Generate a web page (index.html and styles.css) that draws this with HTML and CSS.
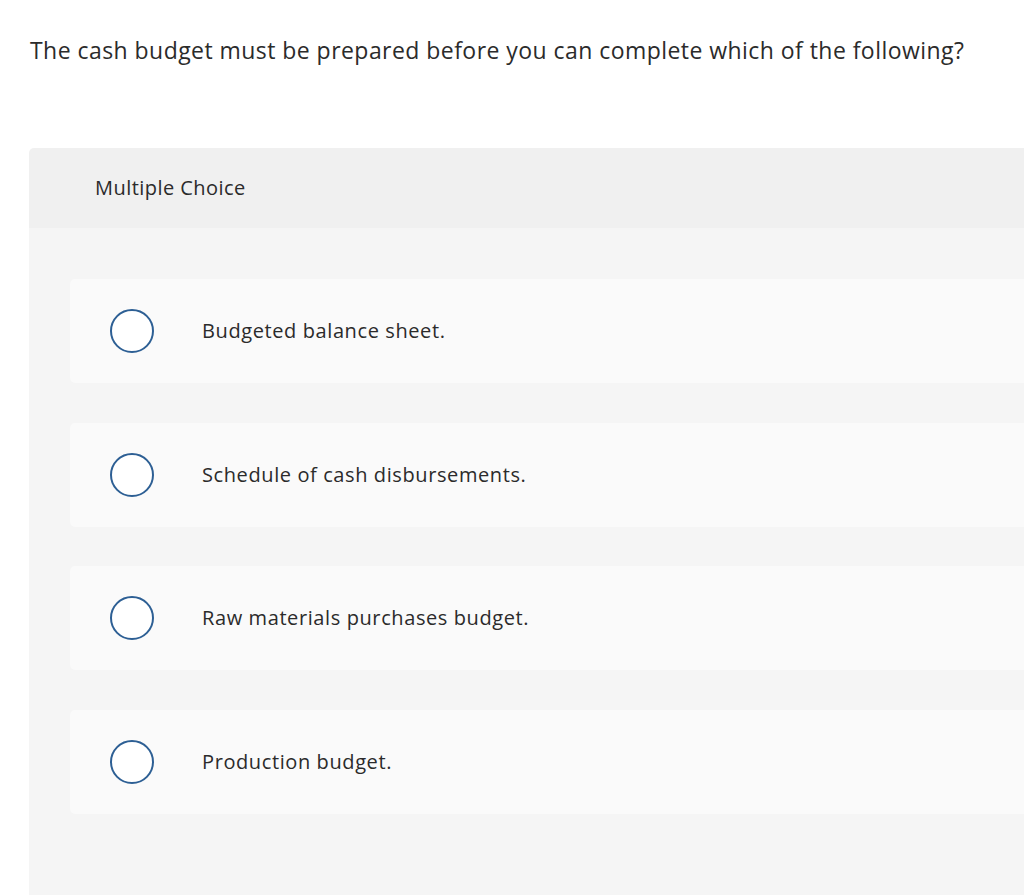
FILE: index.html
```html
<!DOCTYPE html>
<html>
<head>
<meta charset="utf-8">
<link rel="stylesheet" href="styles.css">
</head>
<body>
<div class="page">
  <h1 class="question">The cash budget must be prepared before you can complete which of the following?</h1>
  <div class="panel">
    <div class="panel-head">Multiple Choice</div>
    <div class="panel-body">
      <div class="option"><span class="radio"></span><span class="label">Budgeted balance sheet.</span></div>
      <div class="option"><span class="radio"></span><span class="label">Schedule of cash disbursements.</span></div>
      <div class="option"><span class="radio"></span><span class="label">Raw materials purchases budget.</span></div>
      <div class="option"><span class="radio"></span><span class="label">Production budget.</span></div>
    </div>
  </div>
</div>
</body>
</html>
```
FILE: styles.css
```css
html, body {
  margin: 0;
  padding: 0;
  background: #ffffff;
  overflow: hidden;
}
.page {
  width: 1024px;
  height: 895px;
  overflow: hidden;
  font-family: "Open Sans", "Liberation Sans", sans-serif;
  color: #2b2b2b;
}
.question {
  margin: 0;
  padding: 35px 0 0 30px;
  height: 148px;
  box-sizing: border-box;
  font-size: 23px;
  font-weight: 400;
  line-height: 30px;
  letter-spacing: 0.45px;
}
.panel {
  margin-left: 29px;
  width: 1100px;
  border-radius: 5px 0 0 0;
  overflow: hidden;
}
.panel-head {
  background: #f0f0f0;
  height: 80px;
  box-sizing: border-box;
  padding: 26px 0 0 66px;
  font-size: 20px;
  line-height: 28px;
  letter-spacing: 0.45px;
  color: #2b2b2b;
}
.panel-body {
  background: #f5f5f5;
  padding: 51px 0 200px 41px;
  display: flex;
  flex-direction: column;
  gap: 39.5px;
}
.option {
  background: #fafafa;
  height: 104px;
  border-radius: 5px 0 0 5px;
  display: flex;
  align-items: center;
  padding-left: 40px;
}
.radio {
  width: 44px;
  height: 44px;
  box-sizing: border-box;
  border: 2px solid #2d5f94;
  border-radius: 50%;
  background: #ffffff;
  flex: none;
}
.label {
  margin-left: 48px;
  font-size: 20px;
  line-height: 28px;
  letter-spacing: 0.6px;
  color: #2b2b2b;
}
```
